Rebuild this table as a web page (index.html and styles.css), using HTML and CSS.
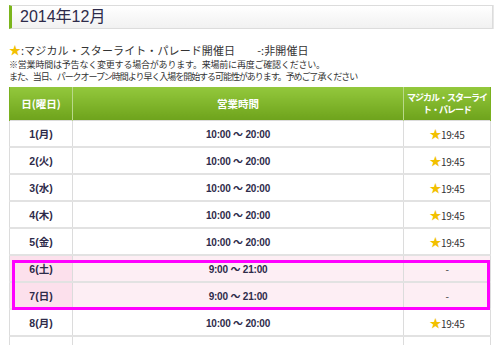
FILE: index.html
```html
<!DOCTYPE html>
<html lang="ja">
<head>
<meta charset="utf-8">
<link rel="stylesheet" href="styles.css">
</head>
<body>
<div class="page">
  <h2 class="title">2014年12月</h2>
  <p class="legend"><span class="star">★</span>:マジカル・スターライト・パレード開催日<span class="gap"></span>-:非開催日</p>
  <p class="note"><span class="l1">※営業時間は予告なく変更する場合があります。来場前に再度ご確認ください。</span><br><span class="l2">また、当日、パークオープン時間より早く入場を開始する可能性があります。予めご了承ください</span></p>
  <div class="tablewrap">
    <table class="sched">
      <thead>
        <tr><th class="c1">日(曜日)</th><th class="c2">営業時間</th><th class="c3"><span class="hl">マジカル・スターライ</span><span class="hl">ト・パレード</span></th></tr>
      </thead>
      <tbody>
        <tr><td class="c1">1(月)</td><td class="c2">10:00 〜 20:00</td><td class="c3"><span class="star">★</span>19:45</td></tr>
        <tr><td class="c1">2(火)</td><td class="c2">10:00 〜 20:00</td><td class="c3"><span class="star">★</span>19:45</td></tr>
        <tr><td class="c1">3(水)</td><td class="c2">10:00 〜 20:00</td><td class="c3"><span class="star">★</span>19:45</td></tr>
        <tr><td class="c1">4(木)</td><td class="c2">10:00 〜 20:00</td><td class="c3"><span class="star">★</span>19:45</td></tr>
        <tr><td class="c1">5(金)</td><td class="c2">10:00 〜 20:00</td><td class="c3"><span class="star">★</span>19:45</td></tr>
        <tr class="we"><td class="c1">6(土)</td><td class="c2">9:00 〜 21:00</td><td class="c3">-</td></tr>
        <tr class="we"><td class="c1">7(日)</td><td class="c2">9:00 〜 21:00</td><td class="c3">-</td></tr>
        <tr><td class="c1">8(月)</td><td class="c2">10:00 〜 20:00</td><td class="c3"><span class="star">★</span>19:45</td></tr>
      </tbody>
    </table>
    <div class="more"><span class="m1"></span><span class="m2"></span><span class="m3"></span></div>
    <div class="highlight"></div>
  </div>
</div>
</body>
</html>
```

FILE: styles.css
```css
html, body {
  margin: 0;
  padding: 0;
  background: #fff;
  overflow: hidden;
}
body {
  font-family: "Noto Sans CJK JP", "Liberation Sans", sans-serif;
  color: #333;
}
.page {
  padding: 5px 0 0 9px;
  width: 484px;
}
.title {
  margin: 0;
  height: 22px;
  border: 1px solid #dcdcdc;
  border-left: 3px solid #7bb51c;
  background: linear-gradient(#ffffff, #f1f1f1);
  box-shadow: 1px 0 0 #e8e8e8;
  font-weight: normal;
  font-family: "Liberation Sans", "Noto Sans CJK JP", sans-serif;
  font-size: 16px;
  line-height: 22px;
  padding-left: 8px;
  color: #2e2b4a;
}
.legend {
  margin: 14px 0 0 0;
  font-size: 11px;
  line-height: 14px;
  color: #333;
  letter-spacing: 0.1px;
}
.gap {
  display: inline-block;
  width: 22px;
}
.star {
  color: #f2c000;
  font-size: 12px;
}
.note {
  margin: 2px 0 0 0;
  font-size: 9px;
  line-height: 12px;
  color: #333;
}
.note .l1 { letter-spacing: -0.2px; }
.note .l2 { letter-spacing: -1.05px; }
.tablewrap {
  position: relative;
  margin-top: 4px;
  width: 482px;
}
.sched {
  width: 482px;
  border-collapse: collapse;
  table-layout: fixed;
}
.sched th {
  height: 33px;
  padding: 0;
  background: linear-gradient(#93c83c, #6ea31c);
  color: #fff;
  font-size: 10.5px;
  font-weight: bold;
  line-height: 11px;
  border-left: 1px solid #b9d98a;
  border-right: 1px solid #b9d98a;
}
.sched th.c1 { border-left: 1px solid #7ab11f; }
.sched th.c3 {
  border-right: 1px solid #7ab11f;
  font-size: 9px;
  letter-spacing: -1px;
  white-space: nowrap;
}
.sched th .hl {
  display: block;
  height: 12px;
  line-height: 12px;
}
.sched .c1 { width: 62px; }
.sched .c3 { width: 86px; }
.sched td {
  height: 25px;
  padding: 0;
  text-align: center;
  border: 1px solid #dcdcdc;
  border-bottom: 2px solid #e2e2e2;
  font-size: 10.5px;
  color: #2e2b4a;
}
.sched td.c1, .sched td.c2 {
  font-weight: bold;
  font-family: "Liberation Sans", "Noto Sans CJK JP", sans-serif;
}
.sched td.c2 {
  font-size: 10px;
  letter-spacing: -0.2px;
}
.sched td.c3 {
  font-size: 10px;
  color: #333;
  letter-spacing: -0.3px;
}
.sched tr.we td { background: #fdeef4; }
.sched tr.we td.c1 { background: #fce0ec; }
.more {
  display: flex;
  height: 12px;
}
.more span {
  border-left: 1px solid #dcdcdc;
}
.more .m1 { width: 62px; }
.more .m2 { width: 332px; }
.more .m3 { width: 86px; border-right: 1px solid #dcdcdc; }
.highlight {
  position: absolute;
  left: 3px;
  top: 173px;
  width: 472px;
  height: 44px;
  border: 3px solid #ff00ff;
  pointer-events: none;
}
```
